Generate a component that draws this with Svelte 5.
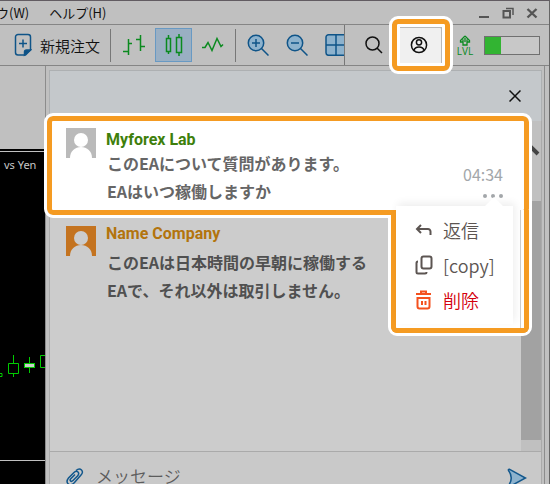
<script lang="ts">
	type Author = 'me' | 'other';

	let messages: { author: string; kind: Author; lines: string[]; time?: string }[] = [
		{
			author: 'Myforex Lab',
			kind: 'me',
			lines: ['このEAについて質問があります。', 'EAはいつ稼働しますか'],
			time: '04:34'
		},
		{
			author: 'Name Company',
			kind: 'other',
			lines: ['このEAは日本時間の早朝に稼働する', 'EAで、それ以外は取引しません。']
		}
	];

	let draft = $state('');
	let level = 30;
</script>

{#snippet avatar(kind: Author)}
	<svg class="avatar {kind}" viewBox="0 0 30 30" aria-hidden="true">
		<rect width="30" height="30" />
		<circle cx="15" cy="12" r="7" />
		<path d="M4 30C4 23 9 19 15 19s11 4 11 11z" />
	</svg>
{/snippet}

{#snippet body(message: (typeof messages)[0])}
	{@render avatar(message.kind)}
	<div class="text">
		<h2 class={message.kind}>{message.author}</h2>
		{#each message.lines as line}
			<p>{line}</p>
		{/each}
	</div>
{/snippet}

<div class="window">
	<header class="menubar">
		<nav>
			<button>ウ(W)</button>
			<button>ヘルプ(H)</button>
		</nav>
		<div class="controls">
			<button aria-label="Minimize">
				<svg width="12" height="12" viewBox="0 0 12 12"><path d="M1 10h10" stroke-width="2" /></svg>
			</button>
			<button aria-label="Restore">
				<svg width="12" height="12" viewBox="0 0 12 12">
					<path d="M1.500 4h6.500v6.500H1.500z" stroke-width="2" />
					<path d="M4 1.500h7V8" />
				</svg>
			</button>
			<button aria-label="Close window">
				<svg width="12" height="12" viewBox="0 0 12 12">
					<path d="M1.500 2l9 8.500M10.500 2l-9 8.500" stroke-width="2.400" />
				</svg>
			</button>
		</div>
	</header>

	<div class="toolbar">
		<div class="tools">
			<button class="new-order">
				<svg class="blue" width="18" height="24" viewBox="0 0 18 24">
					<path
						d="M4 1.500h10a2.500 2.500 0 0 1 2.500 2.500v13l-5 5H4A2.500 2.500 0 0 1 1.500 19.500V4A2.500 2.500 0 0 1 4 1.500zM5 10.500h8M9 6.500v8"
						fill="none"
					/>
					<path d="M10.500 22v-3a2 2 0 0 1 2-2h4z" fill="#0f4f80" />
				</svg>
				新規注文
			</button>
			<div class="charts">
				<button aria-label="Bar chart">
					<svg class="green" width="22" height="22" viewBox="0 0 22 22">
						<path d="M5.500 5v16M0 17.500h5.500M5.500 9.500H9M17.500 1v16M13 5.500h4.500M17.500 12.500H22" />
					</svg>
				</button>
				<button class="active" aria-label="Candlesticks">
					<svg class="green" width="18" height="22" viewBox="0 0 18 22">
						<path d="M1.500 4.500h4v13h-4zM3.500 1v3.500M3.500 17.500V20M11.500 3.500h5v15h-5zM14 0v3.500M14 18.500V22" />
					</svg>
				</button>
				<button aria-label="Line chart">
					<svg class="green" width="22" height="22" viewBox="0 0 22 22">
						<path d="M0 13.500h3l3-5 4 8 5-12 4 8 2-2" />
					</svg>
				</button>
			</div>
			<div class="zooms">
				<button aria-label="Zoom in">
					<svg class="blue" width="22" height="22" viewBox="0 0 22 22">
						<circle cx="9" cy="9" r="7.700" />
						<path d="M5 9h8M9 5v8M14.500 14.500l7 7" />
					</svg>
				</button>
				<button aria-label="Zoom out">
					<svg class="blue" width="22" height="22" viewBox="0 0 22 22">
						<circle cx="9" cy="9" r="7.700" />
						<path d="M5 9h8M14.500 14.500l7 7" />
					</svg>
				</button>
				<button aria-label="Tile windows">
					<svg class="blue" width="22" height="22" viewBox="0 0 22 22">
						<path d="M24 .800H3.500a2.500 2.500 0 0 0-2.500 2.500v15.500a2.500 2.500 0 0 0 2.500 2.500H24M1 11h23M11 1v20M20 1v20" />
					</svg>
				</button>
			</div>
		</div>
		<div class="account">
			<button class="search" aria-label="Search">
				<svg width="18" height="18" viewBox="0 0 18 18">
					<circle cx="7.500" cy="7.500" r="6.500" />
					<path d="M12 12l5 5" />
				</svg>
			</button>
			<button class="user" aria-label="Account">
				<svg width="18" height="18" viewBox="0 0 18 18">
					<circle cx="9" cy="9" r="7.600" />
					<circle cx="9" cy="6.300" r="2.600" />
					<path d="M3.800 14.500c.800-2.500 2.700-3.500 5.200-3.500s4.400 1 5.200 3.500" />
				</svg>
			</button>
			<div class="lvl">
				<svg class="green" width="12" height="11" viewBox="0 0 12 11">
					<path d="M6 1L1.500 5.500V7H4V4.500M6 1l4.500 4.500V7H8V4.500M4 7v3h4V7M6 3v4" stroke-width="1.300" />
				</svg>
				<span>LVL</span>
			</div>
			<div class="meter"><div style:width="{level}%"></div></div>
		</div>
	</div>

	<main>
		<aside>
			<div class="chart">
				<span>vs Yen</span>
				<svg width="45" height="24" viewBox="0 0 45 24">
					<path
						d="M-3 18.500h5v3h-5M13.500 0v8.500M13.500 19v3M8.500 8.500h10v10h-10zM29.500 2v6M29.500 13v5M46 .500h-5.500v12H46"
					/>
					<rect x="24.500" y="8.500" width="10" height="4" />
				</svg>
			</div>
		</aside>

		<section class="chat">
			<div class="chat-head">
				<button aria-label="Close chat">
					<svg width="12" height="12" viewBox="0 0 12 12">
						<path d="M.500.500l11 11M11.500.500l-11 11" />
					</svg>
				</button>
			</div>

			<div class="messages">
				<div class="scrollbar">
					<svg width="20" height="16" viewBox="0 0 20 16"><path d="M3 13l7-7 7 7" /></svg>
					<div class="thumb"></div>
				</div>

				<div class="spotlight">
					<div class="halo"></div>
					<article>
						{@render body(messages[0])}
						<div class="meta">
							<time>{messages[0].time}</time>
							<button aria-label="More">
								<svg width="20" height="4" viewBox="0 0 20 4">
									<circle cx="2" cy="2" r="2" />
									<circle cx="10" cy="2" r="2" />
									<circle cx="18" cy="2" r="2" />
								</svg>
							</button>
						</div>
					</article>
					<div class="popup">
						<div class="menu">
							<button>
								<svg width="18" height="16" viewBox="0 0 18 16">
									<path d="M6 3L2 7l4 4M2 7h11a2.500 2.500 0 0 1 2.500 2.500V13" />
								</svg>
								返信
							</button>
							<button>
								<svg width="18" height="20" viewBox="0 0 18 20">
									<rect x="6.500" y="1.500" width="10" height="12" rx="2" />
									<path d="M3 6.500a1.500 1.500 0 0 0-1.500 1.500V17A1.500 1.500 0 0 0 3 18.500h7a1.500 1.500 0 0 0 1.500-1.500" />
								</svg>
								[copy]
							</button>
							<button class="delete">
								<svg width="18" height="20" viewBox="0 0 18 20">
									<path d="M1 4h15M6 3V1.500h5V3M2.500 8h12v8.500a2 2 0 0 1-2 2h-8a2 2 0 0 1-2-2zM7 11v4M10.500 11v4" />
								</svg>
								削除
							</button>
						</div>
					</div>
				</div>

				<article class="reply">
					{@render body(messages[1])}
				</article>
			</div>

			<form class="compose" onsubmit={(e) => e.preventDefault()}>
				<button type="button" aria-label="Attach">
					<svg width="18" height="18" viewBox="0 0 18 18">
						<path
							d="M10 2.500c2-1.700 4-2 5.500-.500s1 3.500-.500 5l-6.500 7.500c-2 2-4.500 3-6.200 1.500S1 12 2.500 10L8 4.500c1.500-1.500 3-1.500 4-.500s.800 2.500-.500 4L7 12.500c-1 1-2 1-2.500.500s-.500-1.500.500-2.500l4-4"
						/>
					</svg>
				</button>
				<input type="text" placeholder="メッセージ" aria-label="メッセージ" bind:value={draft} />
				<button type="submit" aria-label="Send">
					<svg class="send" width="20" height="20" viewBox="0 0 20 20">
						<path d="M2.200 1.200l16.300 8.800-16.300 8.800q-1.200 0-.700-1.300Q7 10 1.500 2.500 1 1.200 2.200 1.200z" />
					</svg>
				</button>
			</form>
		</section>
	</main>
</div>

<style>
	:global(body) {
		margin: 0;
	}

	.window {
		display: flex;
		flex-direction: column;
		height: 100vh;
		box-sizing: border-box;
		overflow: hidden;
		border-top: 1px solid #625c62;
		border-right: 1px solid #666;
		background: #c0c0c0;
		color: #111;
		font-family: 'Noto Sans CJK JP', sans-serif;
	}

	button {
		display: flex;
		align-items: center;
		justify-content: center;
		flex: none;
		padding: 0;
		border: none;
		background: none;
		color: inherit;
		font: inherit;
		cursor: pointer;
	}

	svg {
		display: block;
		flex: none;
		fill: none;
		stroke: currentColor;
		stroke-width: 1.5;
	}

	.menubar {
		display: flex;
		justify-content: space-between;
		height: 23px;
		border-bottom: 1px solid #858585;
		font-size: 13px;
	}

	nav {
		display: flex;
		gap: 20px;
		margin-left: -4px;
	}

	.controls {
		display: flex;
		gap: 12px;
		padding-right: 11px;
		color: #555;
	}

	.toolbar {
		display: flex;
		height: 40px;
		border-bottom: 1px solid #858585;
	}

	.tools {
		display: flex;
		flex: 1;
		align-items: center;
		overflow: hidden;
		border-right: 1px solid #777;
	}

	.blue {
		color: #0f5488;
	}

	.blue circle,
	.zooms button:last-child path {
		fill: #8db2cd;
	}

	.green {
		color: #0a8a1f;
	}

	.new-order {
		gap: 8px;
		padding-left: 14px;
		font-size: 15px;
		font-weight: 350;
	}

	.charts {
		display: flex;
		align-items: center;
		gap: 10px;
		height: 33px;
		margin-left: 10px;
		padding: 0 11px 0 12px;
		border: solid #777;
		border-width: 0 1px;
	}

	.active {
		width: 37px;
		height: 34px;
		border: 1px solid #6899c3;
		background: #9aafc3;
	}

	.zooms {
		display: flex;
		gap: 17px;
		padding-left: 11px;
	}

	.account {
		display: flex;
		flex: none;
		align-items: center;
		padding-right: 9px;
	}

	.search {
		width: 47px;
		padding-left: 10px;
	}

	.user {
		position: relative;
		z-index: 3;
		box-sizing: border-box;
		width: 58px;
		height: 52px;
		padding-right: 4px;
		border: 5px solid #f59b22;
		border-radius: 6px;
		outline: 3px solid #fff;
		background: #f0f0f0;
		box-shadow:
			inset 0 0 0 3px #fff,
			inset -4px 4px 0 #b8b8b8;
	}

	.lvl {
		display: flex;
		flex-direction: column;
		align-items: center;
		width: 34px;
		padding-right: 4px;
		box-sizing: border-box;
		color: #0a8a1f;
		font: 10px/10px 'Open Sans', sans-serif;
	}

	.meter {
		width: 54px;
		height: 17px;
		border: 1px solid #707070;
		background: #c8c8c8;
	}

	.meter div {
		height: 100%;
		background: #32b432;
	}

	main {
		display: flex;
		flex: 1;
		min-height: 0;
	}

	aside {
		width: 45px;
		flex: none;
		box-sizing: border-box;
		padding: 2px 0 23px;
		border-top: 83px solid #c0c0c0;
		background: #000;
	}

	.chart {
		display: flex;
		flex-direction: column;
		gap: 182px;
		height: 100%;
		box-sizing: border-box;
		padding-top: 5px;
		border: solid #c0c0c0;
		border-width: 1px 0;
		overflow: hidden;
		color: #c8c8c8;
	}

	.chart span {
		padding-left: 4px;
		font: 11px/16px 'Noto Sans', sans-serif;
		white-space: nowrap;
	}

	.chart svg {
		color: #0c0;
		stroke-width: 1;
	}

	.chart rect {
		fill: #ccc;
	}

	.chat {
		display: flex;
		flex: 1;
		flex-direction: column;
		min-width: 0;
		margin-right: 4px;
		padding: 4px 2px 0 3px;
		border: solid #8c8c8c;
		border-width: 0 1px;
	}

	.chat-head {
		display: flex;
		justify-content: flex-end;
		height: 51px;
		flex: none;
		box-sizing: border-box;
		padding: 0 20px;
		border: 1px solid #adb0b2;
		border-bottom: none;
		background: #c4c8cb;
	}

	.messages {
		position: relative;
		z-index: 1;
		flex: 1;
		border: solid #aaa;
		border-width: 0 1px;
		background: #ccc;
	}

	.scrollbar {
		position: absolute;
		inset: 0 0 0 auto;
		width: 20px;
		background: #c0c0c0;
	}

	.scrollbar svg {
		margin: 20px 0 44px;
		color: #444;
		stroke-width: 4;
	}

	.thumb {
		height: 239px;
		background: #a2a2a2;
	}

	.spotlight {
		position: relative;
		isolation: isolate;
		margin: -5px 12px 0 -3px;
	}

	article {
		display: flex;
		position: relative;
		gap: 10px;
		padding-left: 16px;
	}

	.spotlight article {
		height: 89px;
		padding-left: 14px;
		border: 5px solid #f59b22;
		border-radius: 6px;
		outline: 3px solid #fff;
		background: #fff;
	}

	.halo,
	.popup {
		position: absolute;
		top: 94px;
		right: 0;
		box-sizing: border-box;
		width: 138px;
		height: 123px;
		border: 5px solid #f59b22;
		border-top: none;
		border-radius: 0 0 6px 6px;
	}

	.halo {
		outline: 3px solid #fff;
	}

	.popup {
		background: linear-gradient(#ccc, #ccc) no-repeat right 3px top 0 / 1px 100% #fff;
	}

	.avatar {
		width: 30px;
		height: 30px;
		margin-top: 7px;
		fill: #fff;
		stroke: none;
	}

	.avatar.me rect {
		fill: #bababa;
	}

	.avatar.other {
		margin-top: 11px;
		fill: #ccc;
	}

	.avatar.other rect {
		fill: #c4731f;
	}

	.text {
		flex: 1;
		min-width: 0;
		padding-top: 9px;
	}

	h2 {
		margin: 0;
		font: bold 16px/20px Roboto, sans-serif;
	}

	h2.me {
		color: #3e7f0b;
	}

	h2.other {
		color: #b3740d;
	}

	p {
		margin: 0;
		padding-left: 1px;
		color: #666;
		font-size: 16px;
		font-weight: bold;
		line-height: 28px;
		white-space: nowrap;
	}

	.spotlight p:first-of-type {
		margin-top: -1px;
	}

	.reply p {
		color: #505050;
	}

	.reply p:first-of-type {
		margin-top: 4px;
	}

	.meta {
		display: flex;
		flex-direction: column;
		align-items: flex-end;
		gap: 10px;
		padding: 43px 21px 0 0;
		color: #a3a7aa;
	}

	.meta svg {
		fill: currentColor;
		stroke: none;
	}

	time {
		font: 16px/20px 'Noto Sans CJK JP', sans-serif;
	}

	.menu {
		position: relative;
		display: flex;
		flex-direction: column;
		gap: 2px;
		height: 118px;
		box-sizing: border-box;
		margin: -4px 11px 0 0;
		padding: 7px 0 0 19px;
		background: #fff;
		box-shadow: 2px -3px 8px rgba(0, 0, 0, 0.07);
		color: #5c5552;
		font-size: 18px;
		font-weight: 350;
	}

	.menu::before {
		content: '';
		position: absolute;
		top: -6px;
		right: 12px;
		width: 14px;
		height: 14px;
		background: #fff;
		transform: rotate(45deg);
	}

	.menu button {
		position: relative;
		justify-content: flex-start;
		gap: 10px;
		height: 33px;
		font-weight: inherit;
	}

	.menu svg {
		stroke-width: 2;
	}

	.menu .delete {
		color: #d4000c;
	}

	.delete svg {
		color: #f4511e;
	}

	.compose {
		display: flex;
		align-items: flex-start;
		flex: none;
		height: 32px;
		overflow: hidden;
		padding: 0 14px 0 16px;
		border: 1px solid #aaa;
		border-bottom: none;
		background: #c9c9c9;
		color: #12578c;
	}

	.compose button {
		padding-top: 16px;
	}

	.send {
		fill: #8db2cd;
	}

	input {
		flex: 1;
		min-width: 0;
		height: 28px;
		margin: 10px 12px 0;
		padding: 0;
		border: none;
		outline: none;
		background: none;
		color: #555;
		font: 350 17px/28px 'Noto Sans CJK JP', sans-serif;
	}

	input::placeholder {
		color: #5c5c5c;
	}
</style>
